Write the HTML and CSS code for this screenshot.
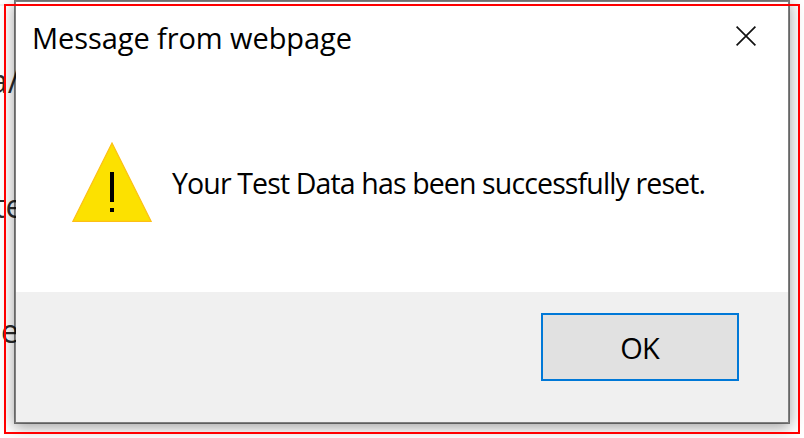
FILE: index.html
```html
<!DOCTYPE html>
<html lang="en">
<head>
<meta charset="utf-8">
<title>Message from webpage</title>
<link rel="stylesheet" href="styles.css">
</head>
<body>
<div class="page">
  <div class="behind"><p class="line-a">a/</p><p class="line-b">te</p><p class="line-c">e</p></div>
  <section class="dialog" role="alertdialog">
    <header class="titlebar">
      <h1 class="title">Message from webpage</h1>
      <button class="close" aria-label="Close"><svg width="20" height="20" viewBox="0 0 20 20"><path d="M.6.6 19.4 19.4M19.4.6.6 19.4" stroke="#111" stroke-width="1.7"/></svg></button>
    </header>
    <div class="content">
      <svg class="warning" width="80" height="80" viewBox="0 0 80 80"><path d="M40 1 79.2 79.4H.8Z" fill="#fce100" stroke="#fdbf16" stroke-width="1.2"/><path d="M38 30h4v30h-4zM38 66h4v4h-4z"/></svg>
      <p class="message">Your Test Data has been successfully reset.</p>
    </div>
    <footer class="actions"><button class="ok"><span>OK</span></button></footer>
  </section>
  <div class="highlight"></div>
</div>
</body>
</html>
```
FILE: styles.css
```css
* { box-sizing: border-box; margin: 0; padding: 0; }
body { width: 804px; height: 438px; overflow: hidden; background: #fff; color: #000; font: 400 29px/40px "Open Sans", "Noto Sans", sans-serif; }
.page { position: relative; width: 804px; height: 438px; padding: 0 14px; overflow: hidden; }
.behind { position: absolute; left: 0; top: 0; width: 16px; height: 438px; overflow: hidden; color: #2b2b2b; font: 32px/40px "Open Sans", sans-serif; white-space: nowrap; }
.behind::before { content: ""; display: block; height: 2px; margin-top: 4px; background: #eee; }
.line-a { margin: 55px 0 0 -10px; }
.line-b { margin: 85px 0 0 -6px; }
.line-c { margin: 85px 0 0 1px; }
.dialog { position: relative; display: flex; flex-direction: column; width: 776px; height: 424px; border: 2px solid rgba(0, 0, 0, .5); background: #fff; background-clip: padding-box; box-shadow: 0 3px 14px rgba(0, 0, 0, .38); }
.titlebar { display: flex; justify-content: space-between; height: 72px; padding: 16px 32px 0 16px; }
.title { font-size: 29px; font-weight: 400; letter-spacing: -.08px; white-space: nowrap; }
.close { display: flex; width: 20px; height: 20px; margin-top: 8px; border: 0; background: none; }
.content { display: flex; flex: 1; padding: 68px 0 0 56px; }
.warning { flex: none; }
.message { margin: 21px 0 0 20px; font-size: 28.5px; letter-spacing: -.87px; white-space: nowrap; }
.actions { display: flex; justify-content: flex-end; height: 130px; padding: 21px 49px 0 0; background: #f0f0f0; }
.ok { display: flex; align-items: center; justify-content: center; width: 198px; height: 68px; padding: 2px 1px 0 0; border: 2px solid #0078d7; background: #e1e1e1; color: #000; font: inherit; letter-spacing: -.8px; }
.highlight { position: absolute; left: 4px; top: 4px; width: 796px; height: 430px; border: 2px solid #f00; }
```
